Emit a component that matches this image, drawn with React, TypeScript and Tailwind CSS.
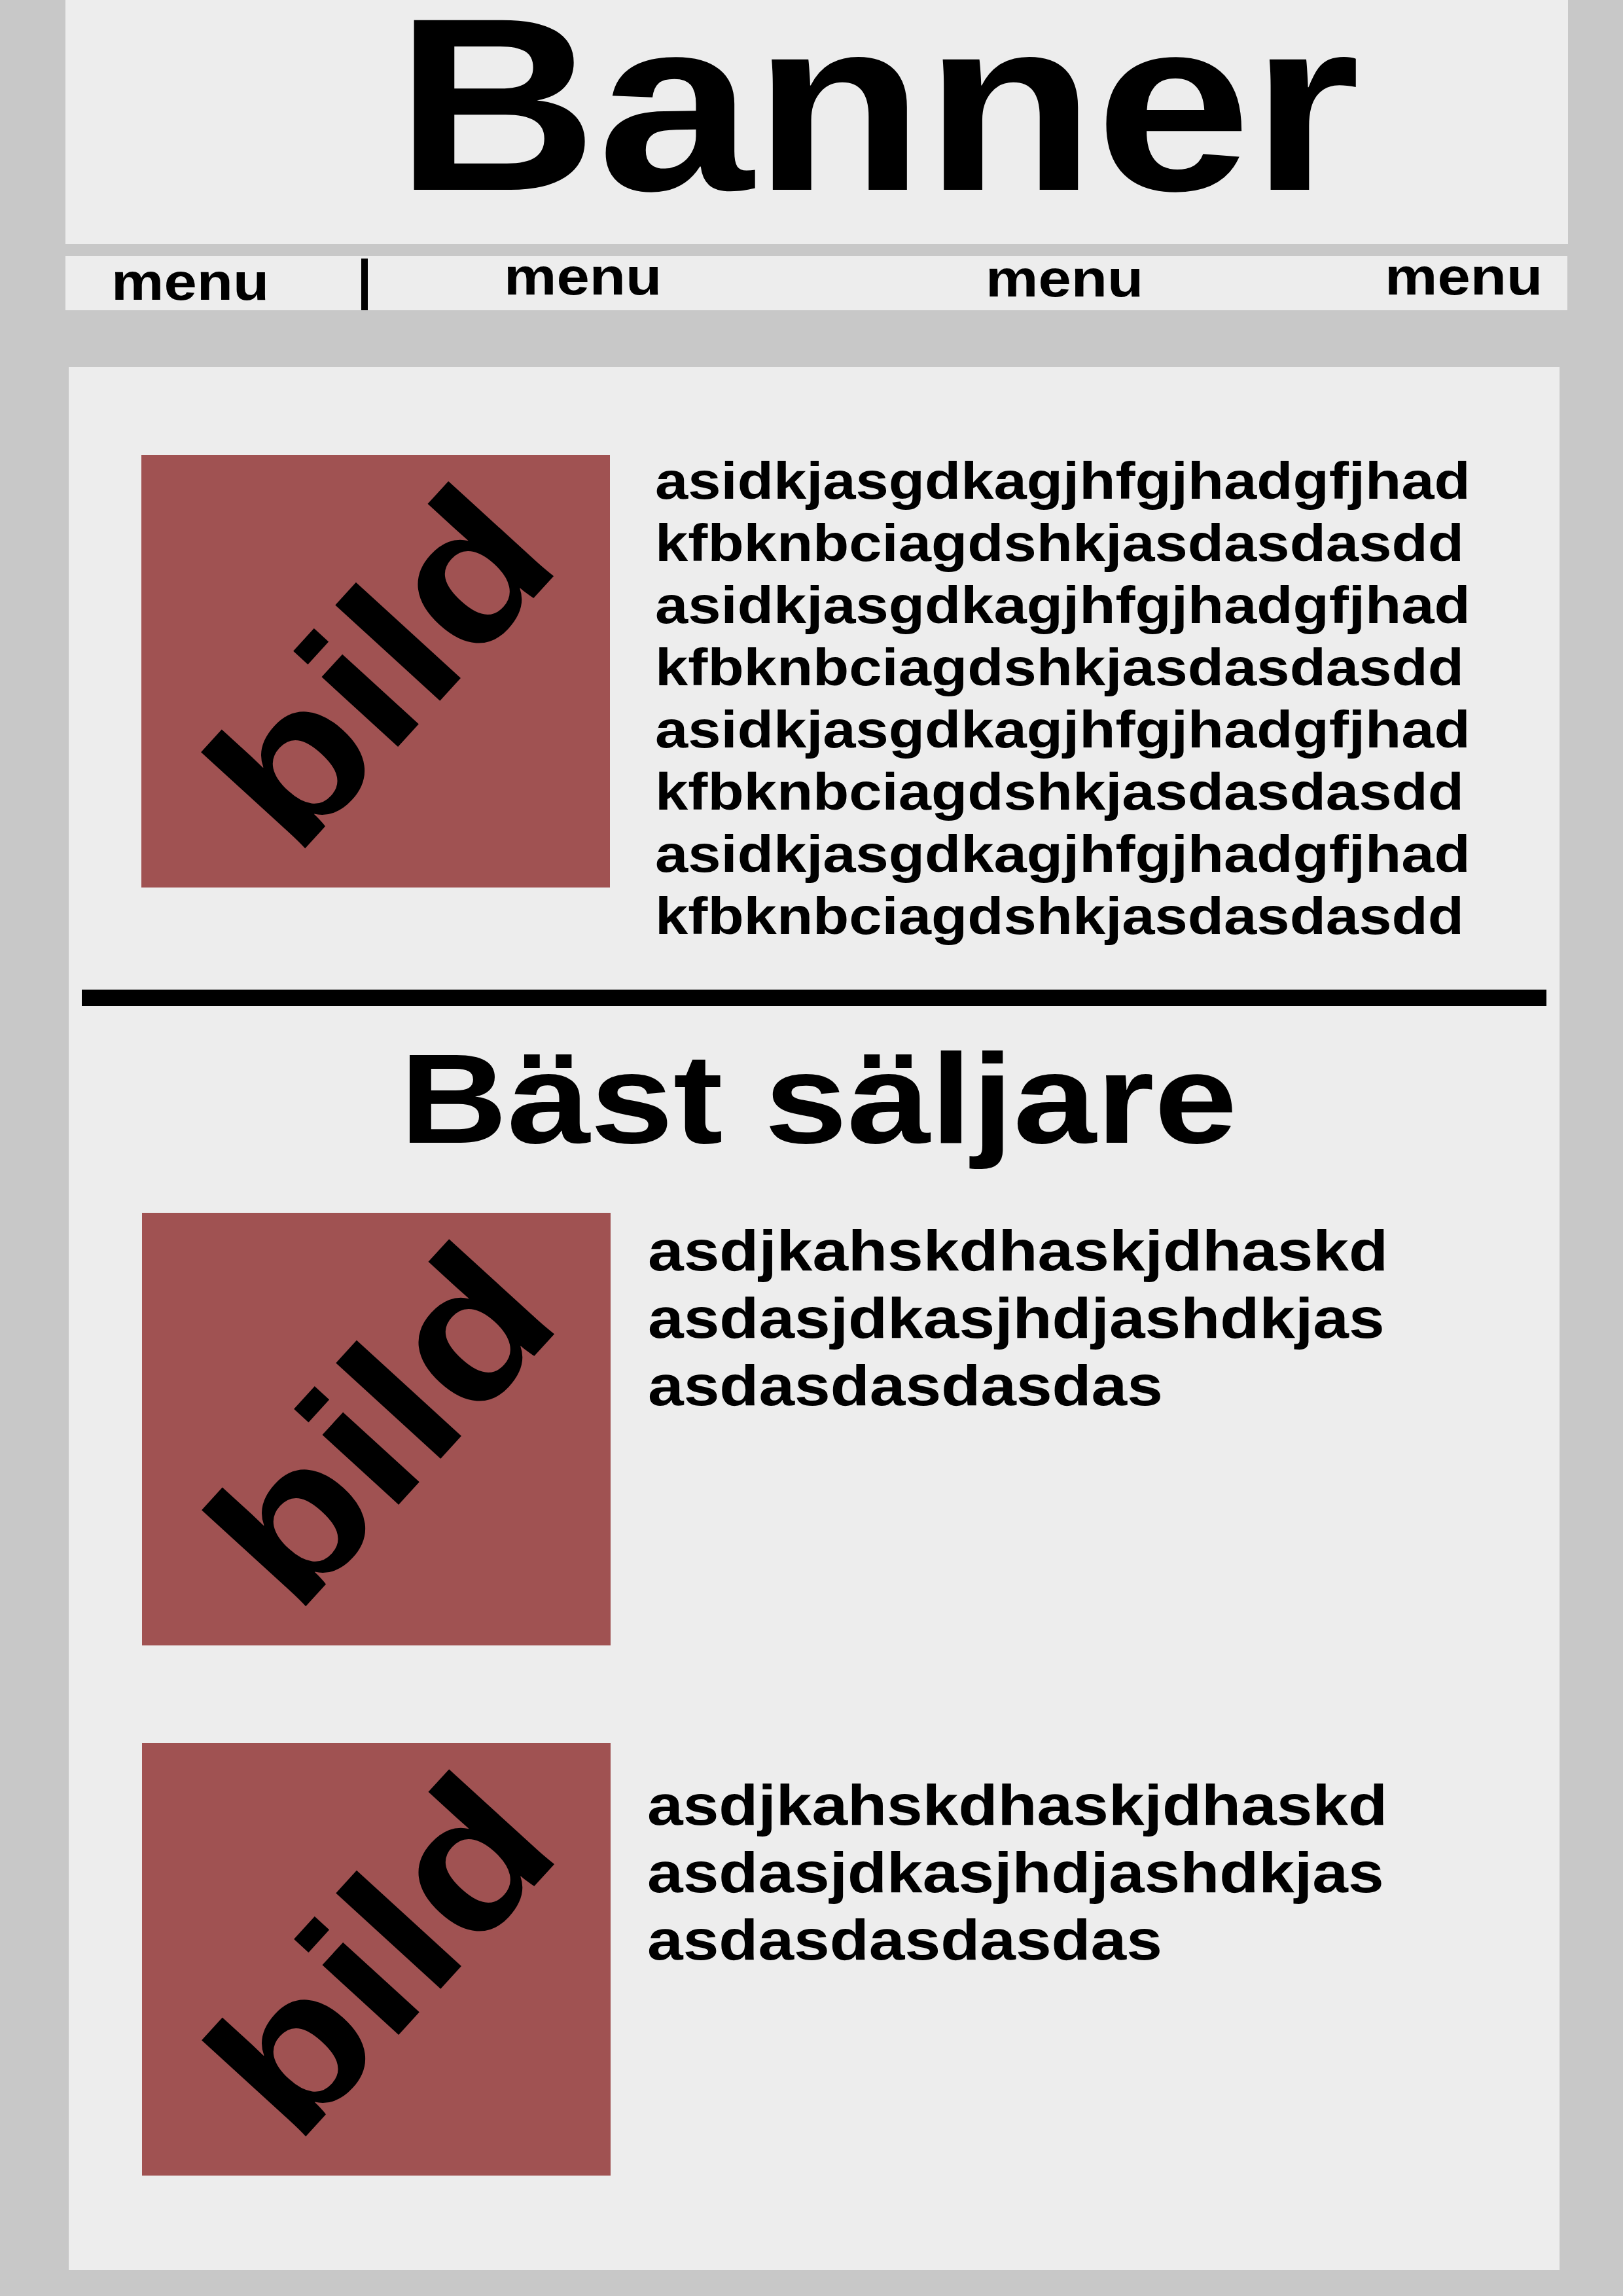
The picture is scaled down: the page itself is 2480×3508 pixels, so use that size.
import React from 'react';

const font = "font-['Liberation_Sans',Arial,sans-serif] font-bold text-black";

const Bild = () => (
  <div className="flex h-[661px] w-[716px] shrink-0 items-center justify-center bg-[#a05252] pb-[15px] pl-[11px]">
    <span className={`${font} block rotate-[-47.6deg] scale-x-[1.145] text-[299px] leading-none`}>bild</span>
  </div>
);

const App = () => {
  const longLines = [
    'asidkjasgdkagjhfgjhadgfjhad',
    'kfbknbciagdshkjasdasdasdd',
    'asidkjasgdkagjhfgjhadgfjhad',
    'kfbknbciagdshkjasdasdasdd',
    'asidkjasgdkagjhfgjhadgfjhad',
    'kfbknbciagdshkjasdasdasdd',
    'asidkjasgdkagjhfgjhadgfjhad',
    'kfbknbciagdshkjasdasdasdd',
  ];
  const shortLines = ['asdjkahskdhaskjdhaskd', 'asdasjdkasjhdjashdkjas', 'asdasdasdasdas'];

  return (
    <div className={`${font} min-h-[3508px] w-full overflow-hidden bg-[#c8c8c8]`}>
      {/* Banner */}
      <div className="ml-[100px] h-[373px] w-[2296px] bg-[#ededed] pl-[504px]">
        <div className="w-fit origin-left scale-x-[1.135] whitespace-nowrap text-[377px] leading-[319px]">Banner</div>
      </div>

      {/* Menu */}
      <div className="ml-[100px] mt-[18px] flex h-[83px] w-[2295px] items-start bg-[#ededed] pl-[70px] text-[80px] leading-[64px]">
        <div className="mt-2 w-[382px] origin-left scale-x-[1.13]">menu</div>
        <div className="mt-1 h-[79px] w-[10px] bg-black" />
        <div className="ml-[208px] w-[736px] origin-left scale-x-[1.13]">menu</div>
        <div className="mt-[3px] w-[610px] origin-left scale-x-[1.13]">menu</div>
        <div className="origin-left scale-x-[1.13]">menu</div>
      </div>

      {/* Content */}
      <div className="ml-[105px] mt-[87px] flex w-[2278px] flex-col bg-[#ededed] pb-[144px]">
        <div className="flex items-start pl-[111px] pt-[126px]">
          <div className="mt-[8px]">
            <Bild />
          </div>
          <div className="ml-[69px] origin-left scale-x-[1.13] whitespace-nowrap text-[80px] leading-[95px]">
            {longLines.map((line, i) => (
              <div key={i}>{line}</div>
            ))}
          </div>
        </div>

        <div className="mx-5 mt-[65px] h-[25px] bg-black" />

        <h1 className="ml-[14px] mt-[45px] w-fit self-center scale-x-[1.175] whitespace-nowrap text-[194px] leading-none">
          Bäst säljare
        </h1>

        <div className="mt-[77px] flex items-start pl-[112px]">
          <Bild />
          <div className="ml-[57px] mt-[6px] origin-left scale-x-[1.13] whitespace-nowrap text-[87px] leading-[103px]">
            {shortLines.map((line, i) => (
              <div key={i}>{line}</div>
            ))}
          </div>
        </div>

        <div className="mt-[149px] flex items-start pl-[112px]">
          <Bild />
          <div className="ml-[56px] mt-[43px] origin-left scale-x-[1.13] whitespace-nowrap text-[87px] leading-[103px]">
            {shortLines.map((line, i) => (
              <div key={i}>{line}</div>
            ))}
          </div>
        </div>
      </div>
    </div>
  );
};

export default App;
